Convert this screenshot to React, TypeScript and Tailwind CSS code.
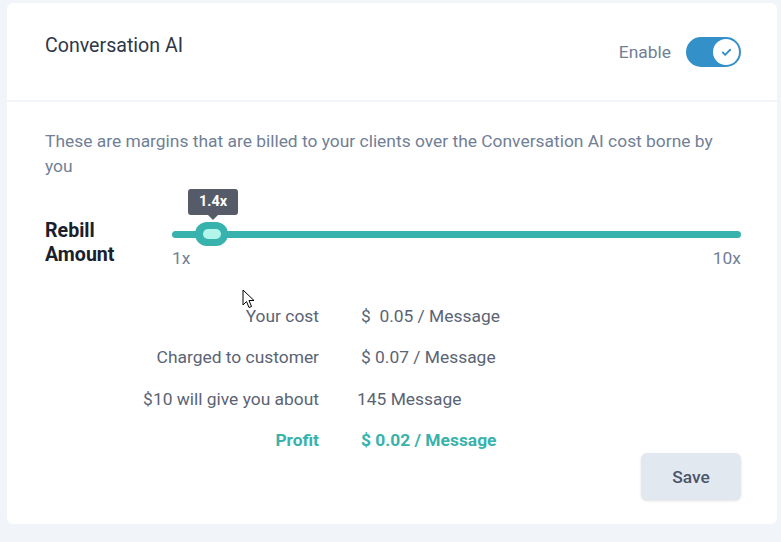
import { Check } from "lucide-react"

const rows = [
  { label: "Your cost", value: "$  0.05 / Message", shift: true },
  { label: "Charged to customer", value: "$ 0.07 / Message", shift: true },
  { label: "$10 will give you about", value: "145 Message", shift: false },
]

const App = () => {
  return (
    <div className="min-h-screen bg-[#f1f5f9] px-[7px] pt-[3px] font-['Roboto',sans-serif]">
      <div className="relative w-[770px] rounded-md bg-white">
        {/* Header */}
        <div className="flex h-[97px] items-start justify-between pl-[38px] pr-[36px]">
          <div className="pt-[29px] text-[19.6px] leading-[28px] text-[#2d3748]">Conversation AI</div>
          <div className="mt-[34px] flex items-center gap-[15px]">
            <span className="text-[17.4px] text-[#718096]">Enable</span>
            <div className="relative h-[30px] w-[55px] rounded-full bg-[#3490c8]">
              <div className="absolute right-[2px] top-[2px] flex h-[26px] w-[26px] items-center justify-center rounded-full bg-white">
                <Check className="h-[11px] w-[11px] text-[#3490c8]" strokeWidth={4} />
              </div>
            </div>
          </div>
        </div>
        <div className="h-[2px] bg-[#f1f5f9]" />

        {/* Body */}
        <div className="pb-[24px] pl-[38px] pr-[36px] pt-[27px]">
          <p className="text-[17.4px] leading-[25px] text-[#718096]">
            These are margins that are billed to your clients over the Conversation AI cost borne by you
          </p>

          <div className="mt-[40px] flex">
            <div className="w-[127px] text-[19.6px] font-bold leading-[24px] text-[#1a202c]">
              Rebill
              <br />
              Amount
            </div>
            <div className="flex-1 pt-[12px]">
              <div className="relative h-[7px] rounded-full bg-[#38b2ac]">
                <div className="absolute left-[16px] top-[-42px] flex h-[26px] w-[50px] items-center justify-center rounded-[3px] bg-[#555b68] text-[14.5px] font-bold text-white">
                  1.4x
                  <span className="absolute bottom-[-5px] left-1/2 h-0 w-0 -translate-x-1/2 border-x-[5px] border-t-[5px] border-x-transparent border-t-[#555b68]" />
                </div>
                <div className="absolute left-[23px] top-[-9px] flex h-[24px] w-[33px] items-center justify-center rounded-full bg-[#38b2ac]">
                  <div className="h-[10px] w-[18px] rounded-full bg-[#b2f5ea]" />
                </div>
              </div>
              <div className="mt-[8px] flex justify-between text-[17.4px] leading-[24px] text-[#718096]">
                <span>1x</span>
                <span>10x</span>
              </div>
            </div>
          </div>

          <div className="mt-[26px] grid grid-cols-[274px_1fr] gap-x-[38px] text-[17.4px] leading-[41.3px] text-[#5a6474]">
            {rows.map((r) => (
              <div key={r.label} className="contents">
                <div className="text-right">{r.label}</div>
                <div className={r.shift ? "whitespace-pre pl-[4px]" : "whitespace-pre"}>{r.value}</div>
              </div>
            ))}
            <div className="text-right font-bold text-[#38b2ac]">Profit</div>
            <div className="pl-[4px] font-bold text-[#38b2ac]">$ 0.02 / Message</div>
          </div>

          <div className="mt-[-8px] flex justify-end">
            <button className="h-[47px] w-[100px] rounded-[6px] bg-[#e2e8f0] text-[17.4px] font-medium text-[#4a5568] shadow-sm">
              Save
            </button>
          </div>
        </div>

        {/* mouse cursor */}
        <svg className="absolute left-[235px] top-[286px]" width="13" height="20" viewBox="0 0 13 20">
          <path d="M1 1 L1 16 L4.5 12.5 L7 18.5 L9.5 17.5 L7 11.5 L12 11.5 Z" fill="white" stroke="black" strokeWidth="1" strokeLinejoin="round" />
        </svg>
      </div>
    </div>
  )
}

export default App
